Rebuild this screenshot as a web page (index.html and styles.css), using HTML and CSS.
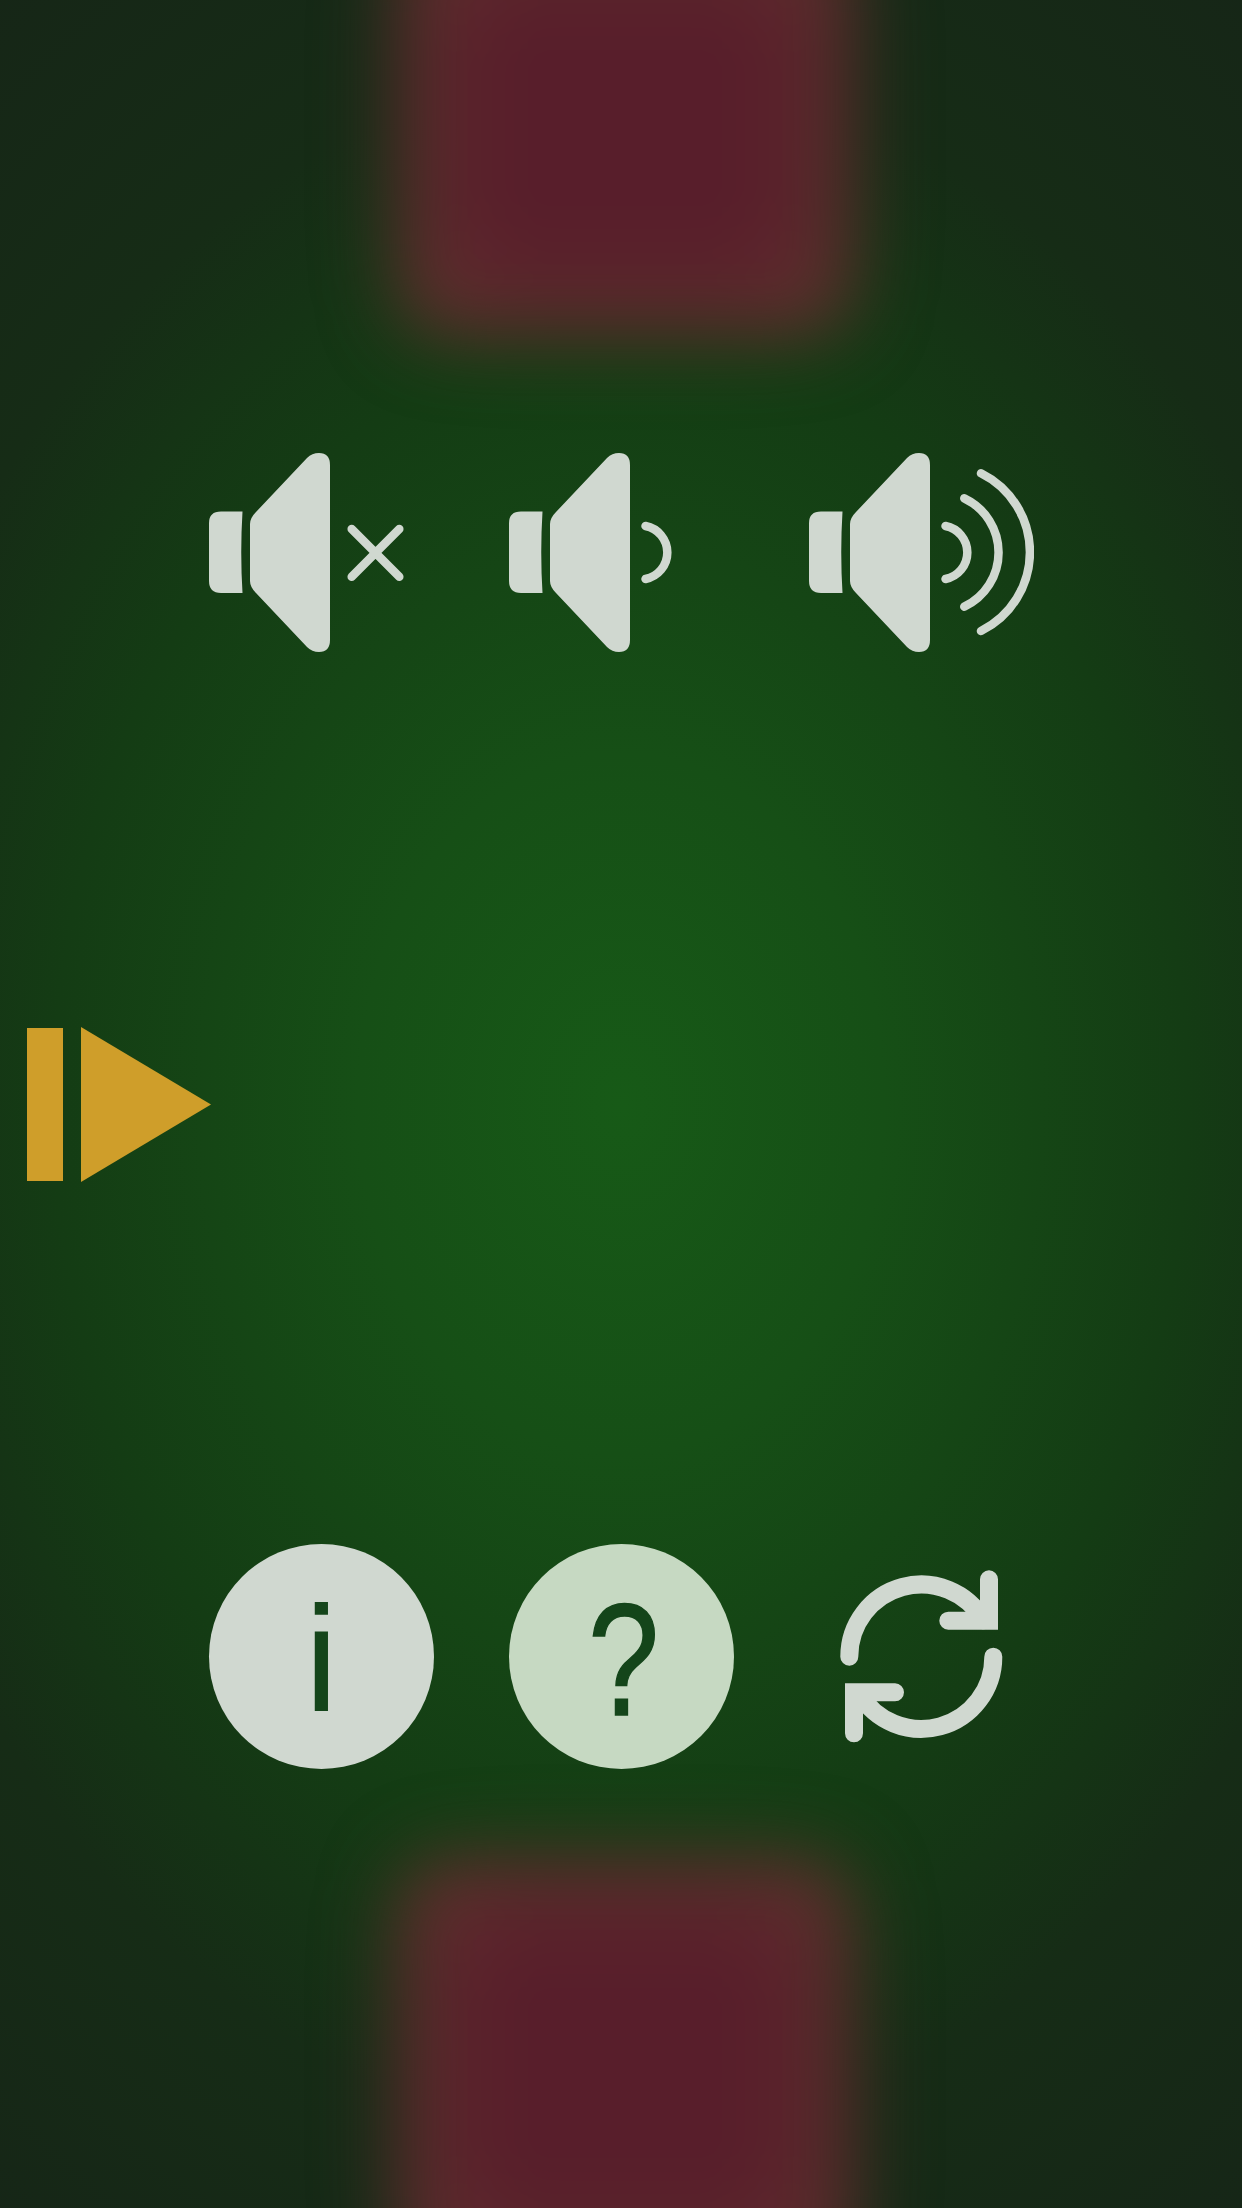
FILE: index.html
```html
<html lang="en">
<head>
    <meta charset="UTF-8">
    <meta name="viewport" content="width=device-width, initial-scale=1.0"/>
    <title>Settings</title>
    <link rel="stylesheet" href="styles.css">
</head>
<body>
<div class="screen">
    <div class="glow glow-top"></div>
    <div class="glow glow-bottom"></div>

    <div class="row volume-row">
        <svg class="speaker" viewBox="0 0 225 200">
            <path class="speaker-body" d="M33.5 58.5H12Q0 58.5 0 70V128Q0 140 12 140H33.5Q31 99 33.5 58.5Z"/>
            <path class="speaker-body" d="M41 71Q41 65 47 59L98 5Q103 0 110 0Q121 0 121 12V187Q121 199 110 199Q103 199 98 194L47 140Q41 134 41 128Z"/>
            <path class="speaker-wave" d="M142.7 76L190.3 123.7M190.3 76L142.7 123.7"/>
        </svg>
        <svg class="speaker" viewBox="0 0 225 200">
            <path class="speaker-body" d="M33.5 58.5H12Q0 58.5 0 70V128Q0 140 12 140H33.5Q31 99 33.5 58.5Z"/>
            <path class="speaker-body" d="M41 71Q41 65 47 59L98 5Q103 0 110 0Q121 0 121 12V187Q121 199 110 199Q103 199 98 194L47 140Q41 134 41 128Z"/>
            <path class="speaker-wave" d="M136.5 73A27 27 0 0 1 136.5 126"/>
        </svg>
        <svg class="speaker" viewBox="0 0 225 200">
            <path class="speaker-body" d="M33.5 58.5H12Q0 58.5 0 70V128Q0 140 12 140H33.5Q31 99 33.5 58.5Z"/>
            <path class="speaker-body" d="M41 71Q41 65 47 59L98 5Q103 0 110 0Q121 0 121 12V187Q121 199 110 199Q103 199 98 194L47 140Q41 134 41 128Z"/>
            <path class="speaker-wave" d="M136.5 73A27 27 0 0 1 136.5 126"/>
            <path class="speaker-wave" d="M155.3 45.3A60 60 0 0 1 155.3 153.7"/>
            <path class="speaker-wave" d="M172 20.3A88 88 0 0 1 172 178"/>
        </svg>
    </div>

    <div class="play-row">
        <svg class="play" viewBox="0 0 184 155">
            <rect x="0" y="1" width="36" height="153"/>
            <polygon points="54,0 184,77.5 54,155"/>
        </svg>
    </div>

    <div class="row button-row">
        <div class="round-button info">i</div>
        <div class="round-button help"><span>?</span></div>
        <svg class="refresh" viewBox="0 0 225 225">
            <path d="M40.3 112.7A72 72 0 0 1 174.5 76.2"/>
            <path d="M180 35.3V76.7H139.3"/>
            <path d="M184.3 112.7A72 72 0 0 1 50.1 149.2"/>
            <path d="M45 189.3V148.3H86"/>
        </svg>
    </div>
</div>
</body>
</html>
```

FILE: styles.css
```css
html, body {
    margin: 0;
    height: 100%;
}
body {
    font-family: "Liberation Sans", sans-serif;
}
.screen {
    position: relative;
    overflow: hidden;
    box-sizing: border-box;
    width: 1242px;
    height: 2208px;
    padding-top: 453px;
    background: radial-gradient(1050px 1400px at 621px 1104px, #175a17 0%, #164f16 25%, #143c14 54%, #162c16 74%, #162617 100%);
}
.glow {
    position: absolute;
    left: 398px;
    width: 454px;
    background-color: #62332f;
    border-radius: 50px;
    filter: blur(36px);
}
.glow::after {
    content: "";
    position: absolute;
    top: 40px;
    right: 40px;
    bottom: 40px;
    left: 40px;
    background-color: #581e2b;
    border-radius: 50px;
    filter: blur(36px);
}
.glow-top {
    top: -80px;
    height: 416px;
}
.glow-bottom {
    bottom: -80px;
    height: 430px;
}
.row {
    position: relative;
    display: flex;
    gap: 75px;
    padding-left: 209px;
}
.speaker {
    display: block;
    width: 225px;
    height: 200px;
    filter: blur(0.6px);
}
.speaker-body {
    fill: #d0d8d0;
}
.speaker-wave {
    fill: none;
    stroke: #d0d8d0;
    stroke-width: 8.5;
    stroke-linecap: round;
}
.play-row {
    position: relative;
    margin-top: 374px;
    padding-left: 27px;
}
.play {
    display: block;
    width: 184px;
    height: 155px;
    fill: #cf9e2a;
    filter: blur(0.6px);
}
.button-row {
    margin-top: 362px;
}
.round-button {
    display: flex;
    justify-content: center;
    align-items: center;
    box-sizing: border-box;
    width: 225px;
    height: 225px;
    padding-top: 6px;
    border-radius: 50%;
    color: #14451a;
    font-size: 150px;
    line-height: 219px;
}
.info {
    background-color: #d0d8d0;
}
.help {
    padding-left: 4px;
    background-color: #c6d9c2;
    font-size: 160px;
    -webkit-text-stroke: 1.5px #14451a;
}
.help span {
    display: inline-block;
    transform: scaleX(0.8);
}
.refresh {
    display: block;
    width: 225px;
    height: 225px;
    fill: none;
    stroke: #d0d8d0;
    stroke-width: 18;
    stroke-linecap: round;
    filter: blur(0.6px);
}
```
